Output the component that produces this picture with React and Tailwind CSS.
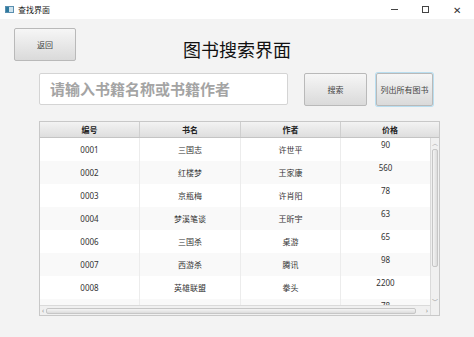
import React from "react";

const rows = [
  ["0001", "三国志", "许世平", "90"],
  ["0002", "红楼梦", "王家康", "560"],
  ["0003", "京瓶梅", "许肖阳", "78"],
  ["0004", "梦溪笔谈", "王昕宇", "63"],
  ["0006", "三国杀", "桌游", "65"],
  ["0007", "西游杀", "腾讯", "98"],
  ["0008", "英雄联盟", "拳头", "2200"],
  ["0010", "诸葛西游", "4200", "78"],
];

const font = { fontFamily: '"Noto Sans", "Noto Sans CJK SC", sans-serif' };

const btn =
  "flex items-center justify-center rounded-[2px] border border-[#b9b9b9] bg-gradient-to-b from-[#f6f6f6] to-[#dadada] text-[8px] text-[#444]";

const App = () => (
  <div className="w-[474px] h-[337px] bg-[#f3f3f3] flex flex-col overflow-hidden" style={font}>
    {/* title bar */}
    <div className="h-[19px] bg-white flex items-center shrink-0">
      <div className="ml-[5px] w-[9px] h-[7px] border border-[#5a8fb0] bg-[#cfe3ee] flex">
        <div className="w-[3px] bg-[#2e7a9e]" />
      </div>
      <span className="ml-[4px] text-[8px] text-[#222]">查找界面</span>
      <div className="ml-auto flex items-center text-[#333]">
        <span className="w-[31px] flex justify-center">
          <span className="block w-[7px] h-px bg-[#444]" />
        </span>
        <span className="w-[31px] flex justify-center">
          <span className="block w-[7px] h-[7px] border border-[#444]" />
        </span>
        <span className="w-[31px] flex justify-center text-[10px] leading-none mr-[2px]">✕</span>
      </div>
    </div>

    {/* header row */}
    <div className="grid grid-cols-[1fr_auto_1fr] items-start pt-[9px]">
      <div className="pl-[14px]">
        <button className={`${btn} w-[62px] h-[33px]`}>返回</button>
      </div>
      <h1 className="text-[18px] text-[#111] leading-none mt-[13px]">图书搜索界面</h1>
      <div />
    </div>

    {/* search row */}
    <div className="flex items-start pl-[39px] mt-[12px]">
      <div className="w-[249px] h-[32px] bg-white border border-[#d4d4d4] rounded-[2px] flex items-center pl-[10px]">
        <span className="text-[15px] font-bold text-[#a4a4a4] leading-none">请输入书籍名称或书籍作者</span>
      </div>
      <button className={`${btn} w-[63px] h-[33px] ml-[16px]`}>搜索</button>
      <button className={`${btn} w-[57px] h-[33px] ml-[9px] border-[#6cb4d8] ring-1 ring-[#b9def0]`}>列出所有图书</button>
    </div>

    {/* table */}
    <div className="ml-[39px] mt-[15px] w-[401px] h-[195px] border border-[#c8c8c8] bg-white flex flex-col text-[8px] text-[#333]">
      <div className="h-[16px] shrink-0 grid grid-cols-[100px_101px_100px_1fr] bg-gradient-to-b from-[#f3f3f3] to-[#dedede] border-b border-[#c4c4c4] font-bold text-[#222]">
        {["编号", "书名", "作者", "价格"].map((h) => (
          <div key={h} className="flex items-center justify-center border-r border-[#cfcfcf] last:border-r-0">
            {h}
          </div>
        ))}
      </div>
      <div className="flex flex-1 min-h-0">
        <div className="flex-1 flex flex-col min-w-0">
          <div className="flex-1 overflow-hidden">
            {rows.map((r, i) => (
              <div
                key={r[0]}
                className={`h-[23px] grid grid-cols-[100px_101px_100px_1fr] ${i % 2 ? "bg-[#f9f9f9]" : "bg-white"}`}
              >
                <div className="flex items-center justify-center border-r border-[#ececec]">{r[0]}</div>
                <div className="flex items-center justify-center border-r border-[#ececec]">{r[1]}</div>
                <div className="flex items-center justify-center border-r border-[#ececec]">{r[2]}</div>
                <div className="flex justify-center pt-[2px] leading-[10px]">{r[3]}</div>
              </div>
            ))}
          </div>
          {/* horizontal scrollbar */}
          <div className="h-[10px] shrink-0 bg-[#f0f0f0] border-t border-[#dadada] flex items-center px-[2px] gap-[2px]">
            <span className="text-[7px] text-[#999] leading-none">‹</span>
            <div className="flex-1 h-[6px] rounded-[2px] border border-[#c6c6c6] bg-gradient-to-b from-[#f4f4f4] to-[#dcdcdc]" />
            <span className="w-[10px] text-[7px] text-[#999] leading-none text-right">›</span>
          </div>
        </div>
        {/* vertical scrollbar */}
        <div className="w-[9px] shrink-0 bg-[#f0f0f0] border-l border-[#dadada] flex flex-col items-center py-[2px]">
          <span className="text-[6px] text-[#999] leading-none">︿</span>
          <div className="w-[6px] h-[118px] mt-[3px] rounded-[2px] border border-[#c6c6c6] bg-gradient-to-r from-[#f4f4f4] to-[#dcdcdc]" />
          <span className="mt-auto text-[6px] text-[#999] leading-none mb-[8px]">﹀</span>
        </div>
      </div>
    </div>
  </div>
);

export default App;
